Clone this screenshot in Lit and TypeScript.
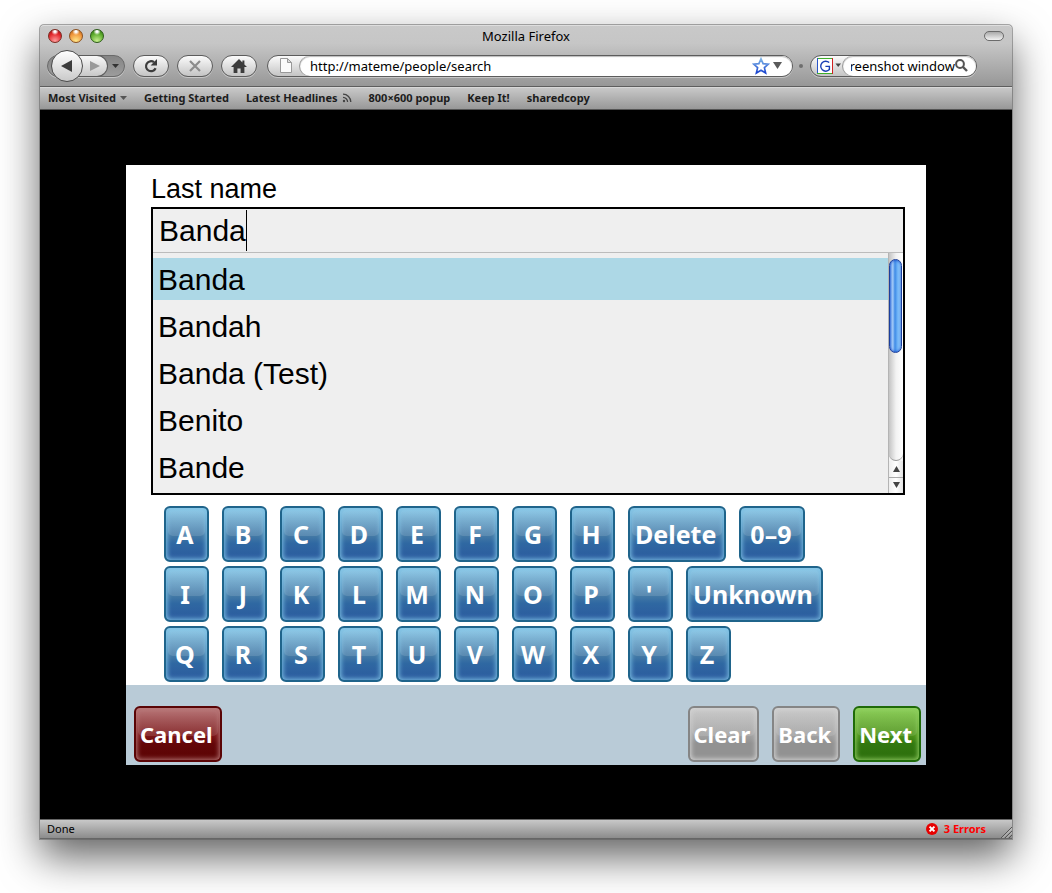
import { LitElement, html, css, svg } from "lit";
import { customElement, property, state, query } from "lit/decorators.js";
import { classMap } from "lit/directives/class-map.js";

const UI_FONT = css`"Noto Sans", "Open Sans", sans-serif`;
const FORM_FONT = css`"Liberation Sans", Arial, sans-serif`;

@customElement("glass-key")
class GlassKey extends LitElement {
  @property() label = "";
  @property({ reflect: true }) tone = "blue";

  static styles = css`
    :host {
      display: block;
      --edge: #1f648b;
      --top: #92cdea;
      --mid: #4379a6;
      --low: #2f68a2;
      --end: #2b5a9e;
      --glow: #7cc0e4;
    }
    :host([tone="red"]) {
      --edge: #5a0405;
      --top: #b87678;
      --mid: #7a1416;
      --low: #640709;
      --end: #5a0303;
      --glow: #b87878;
    }
    :host([tone="gray"]) {
      --edge: #858585;
      --top: #cacaca;
      --mid: #a0a0a0;
      --low: #929292;
      --end: #929292;
      --glow: #d4d4d4;
    }
    :host([tone="green"]) {
      --edge: #1f6a08;
      --top: #8ccf58;
      --mid: #4a9016;
      --low: #327810;
      --end: #2c6c0c;
      --glow: #92d064;
    }
    .key {
      position: relative;
      isolation: isolate;
      display: block;
      box-sizing: border-box;
      min-width: 45px;
      width: 100%;
      height: 56px;
      margin: 0;
      padding: 0 8px 0 5px;
      border: 2px solid var(--edge);
      border-radius: 6px;
      color: #fff;
      font: bold 25px/52px ${UI_FONT};
      text-align: center;
      white-space: nowrap;
      cursor: pointer;
      background: linear-gradient(var(--top), var(--mid) 54%, var(--low) 68%, var(--end));
      box-shadow: inset 0 0 5px 1px var(--glow);
    }
    .key.word {
      min-width: 66px;
    }
    .key::before {
      content: "";
      position: absolute;
      z-index: -1;
      inset: 2px 2px 24px;
      border-radius: 5px;
      background: linear-gradient(rgba(255, 255, 255, 0.02), rgba(255, 255, 255, 0.12));
    }
    :host(:not([tone="blue"])) .key {
      padding: 0 7px 0 4px;
      font-size: 22px;
    }
  `;

  render() {
    return html`<button class=${classMap({ key: true, word: this.label.length > 1 })} type="button">${this.label}</button>`;
  }
}

@customElement("browser-chrome")
class BrowserChrome extends LitElement {
  @query(".search-text") searchText!: HTMLInputElement;

  static styles = css`
    :host {
      display: block;
      font-family: ${UI_FONT};
      color: #000;
    }
    .top {
      border-bottom: 1px solid #5e5e5e;
      background: linear-gradient(#c9c9c9, #c6c6c6 30%, #979797);
      box-shadow: inset 0 1px #dedede;
      border-radius: 4px 4px 0 0;
    }
    .titlebar {
      display: grid;
      grid-template-columns: 1fr auto 1fr;
      align-items: center;
      height: 22px;
      padding: 0 8px;
    }
    .lights {
      display: flex;
      gap: 7px;
    }
    .light {
      width: 14px;
      height: 14px;
      padding: 0;
      box-sizing: border-box;
      border: 1px solid #7b2a20;
      border-radius: 50%;
      background: radial-gradient(circle at 50% 12%, #fff 0 8%, transparent 30%),
        radial-gradient(circle at 50% 90%, #ff9d9d, #e2262b 60%, #8c0f12);
    }
    .light.amber {
      border-color: #8a5020;
      background: radial-gradient(circle at 50% 12%, #fff 0 8%, transparent 30%),
        radial-gradient(circle at 50% 90%, #ffe88a, #f0943a 60%, #a85a10);
    }
    .light.green {
      border-color: #2c5c18;
      background: radial-gradient(circle at 50% 12%, #fff 0 8%, transparent 30%),
        radial-gradient(circle at 50% 90%, #c8f090, #5cab2c 60%, #2c6c10);
    }
    .title {
      font-size: 13px;
      line-height: 22px;
    }
    .collapse {
      justify-self: end;
      width: 20px;
      height: 10px;
      box-sizing: border-box;
      padding: 0;
      border: 1px solid #6b6b6b;
      border-radius: 5px;
      background: linear-gradient(#aaa, #f2f2f2);
    }
    .toolbar {
      display: flex;
      align-items: center;
      gap: 8px;
      box-sizing: border-box;
      height: 39px;
      padding: 0 35px 2px 7px;
    }
    .pill {
      box-sizing: border-box;
      height: 22px;
      border: 1px solid #5c5c5c;
      border-radius: 11px;
      background: linear-gradient(#fbfbfb, #c4c4c4);
      box-shadow: 0 1px rgba(255, 255, 255, 0.4);
    }
    button.pill {
      display: grid;
      place-items: center;
      width: 36px;
      padding: 0;
    }
    .history {
      display: flex;
      align-items: center;
      width: 78px;
      background: linear-gradient(#858585, #9c9c9c);
      border-color: #6a6a6a;
    }
    .back {
      display: grid;
      place-items: center;
      flex: none;
      box-sizing: border-box;
      width: 32px;
      height: 32px;
      padding: 0;
      margin-left: 3px;
      z-index: 1;
      border: 1px solid #4c4c4c;
      border-radius: 50%;
      background: linear-gradient(#fff, #c9c9c9);
    }
    .forward {
      display: grid;
      place-items: center;
      width: 30px;
      height: 22px;
      padding: 0 0 0 4px;
      margin-left: -5px;
      border: 1px solid #5c5c5c;
      border-left: 0;
      border-radius: 0 11px 11px 0;
      background: linear-gradient(#f8f8f8, #c8c8c8);
    }
    .drop {
      display: grid;
      place-items: center;
      padding: 0;
      border: 0;
      background: none;
    }
    .history .drop {
      width: 14px;
      height: 20px;
    }
    .url {
      display: flex;
      flex: 1;
      margin-left: 2px;
      min-width: 0;
    }
    .badge {
      display: flex;
      align-items: center;
      justify-content: center;
      width: 32px;
      padding-left: 4px;
      box-sizing: border-box;
    }
    .field {
      display: flex;
      flex: 1;
      align-items: center;
      min-width: 0;
      padding: 0 10px;
      border-radius: 10px;
      background: #fff;
      box-shadow: inset 0 1px 1px #bbb, -1px 0 #999;
    }
    .field input {
      flex: 1;
      min-width: 0;
      width: 0;
      height: 20px;
      padding: 0;
      border: 0;
      outline: 0;
      background: none;
      color: #000;
      font: 13px/20px ${UI_FONT};
    }
    .url .drop {
      margin-left: 3px;
    }
    .grip {
      width: 4px;
      height: 4px;
      border-radius: 50%;
      background: #6e6e6e;
      margin: 0 -2px;
    }
    .search {
      display: flex;
      width: 167px;
      margin-left: 1px;
    }
    .search .field {
      padding: 0 8px;
    }
    .icon-button {
      display: grid;
      place-items: center;
      padding: 0;
      border: 0;
      background: none;
    }
    .bookmarks {
      display: flex;
      align-items: center;
      gap: 17px;
      height: 22px;
      padding: 0 8px;
      border-bottom: 1px solid #555;
      background: linear-gradient(#cacaca, #989898);
      box-shadow: inset 0 1px #d8d8d8;
    }
    .bookmark {
      display: flex;
      align-items: center;
      gap: 4px;
      color: #1c1c1c;
      font-size: 11px;
      font-weight: bold;
      line-height: 20px;
      text-decoration: none;
      white-space: nowrap;
    }
  `;

  firstUpdated() {
    this.searchText.scrollLeft = this.searchText.scrollWidth;
  }

  private triangle(width: number, height: number, fill = "#444") {
    return html`<svg width=${width} height=${height} viewBox="0 0 10 10" preserveAspectRatio="none">
      ${svg`<path d="M0 0H10L5 10Z" fill=${fill} />`}
    </svg>`;
  }

  render() {
    return html`
      <div class="top">
        <div class="titlebar">
          <div class="lights">
            <button class="light" aria-label="Close"></button>
            <button class="light amber" aria-label="Minimize"></button>
            <button class="light green" aria-label="Zoom"></button>
          </div>
          <div class="title">Mozilla Firefox</div>
          <button class="collapse" aria-label="Toggle toolbar"></button>
        </div>
        <div class="toolbar">
          <div class="pill history">
            <button class="back" aria-label="Back">
              <svg width="12" height="12" viewBox="0 0 12 12"><path d="M0 6L11 0V12Z" fill="#3c3c3c" /></svg>
            </button>
            <button class="forward" aria-label="Forward">
              <svg width="10" height="10" viewBox="0 0 10 10"><path d="M10 5L0 0V10Z" fill="#999" /></svg>
            </button>
            <button class="drop" aria-label="Recent pages">${this.triangle(7, 4, "#333")}</button>
          </div>
          <button class="pill" aria-label="Reload">
            <svg width="14" height="14" viewBox="0 0 14 14">
              <path d="M11.6 9.2A5 5 0 1 1 10 3.2" fill="none" stroke="#3c3c3c" stroke-width="2.2" />
              <path d="M13 0V6.4H6.6Z" fill="#3c3c3c" />
            </svg>
          </button>
          <button class="pill" aria-label="Stop">
            <svg width="12" height="12" viewBox="0 0 12 12">
              <path d="M1 1L11 11M11 1L1 11" fill="none" stroke="#8c8c8c" stroke-width="2.2" />
            </svg>
          </button>
          <button class="pill" aria-label="Home">
            <svg width="16" height="14" viewBox="0 0 16 14">
              <path d="M8 0L11.4 3.4V1.4H13.4V5.4L16 8H13.4V14H9.6V9.4H6.4V14H2.6V8H0Z" fill="#3c3c3c" />
            </svg>
          </button>
          <div class="pill url">
            <div class="badge">
              <svg width="12" height="15" viewBox="0 0 12 15">
                <path d="M.5 .5H7.5L11.5 4.5V14.5H.5Z" fill="#fbfbfb" stroke="#999" />
                <path d="M7.5 .5V4.5H11.5Z" fill="#ddd" stroke="#999" />
              </svg>
            </div>
            <div class="field">
              <input type="text" aria-label="Address" .value=${"http://mateme/people/search"} />
              <button class="icon-button" aria-label="Bookmark this page">
                <svg width="18" height="18" viewBox="0 0 18 18">
                  <defs>
                    <linearGradient id="star" x1="0" y1="0" x2="0" y2="1">
                      <stop offset="0" stop-color="#7db4e6" />
                      <stop offset="1" stop-color="#1b45cf" />
                    </linearGradient>
                  </defs>
                  <path
                    d="M9 1.8L11.1 6.6L16.3 7.1L12.4 10.6L13.6 15.9L9 13.2L4.4 15.9L5.6 10.6L1.7 7.1L6.9 6.6Z"
                    fill="#fff" stroke="url(#star)" stroke-width="1.7" />
                </svg>
              </button>
              <button class="drop" aria-label="Show history">${this.triangle(9, 7, "#5a5a5a")}</button>
            </div>
          </div>
          <div class="grip"></div>
          <div class="pill search">
            <button class="drop badge" aria-label="Search engine">
              <svg width="28" height="16" viewBox="0 0 28 16">
                <rect x="2" width="16" height="16" fill="#fff" />
                <path d="M2 .5H17" stroke="#3fae2a" />
                <path d="M2.5 0V16" stroke="#2a55c8" />
                <path d="M2 15.5H18" stroke="#3fae2a" />
                <path d="M17.5 0V16" stroke="#d02020" />
                <path d="M14.2 4.6A5 5 0 1 0 14.4 11.6V8.4H10.4" fill="none" stroke="#1b3fb4" stroke-width="1.4" />
                <path d="M20.5 5.5H26L23.2 9Z" fill="#444" />
              </svg>
            </button>
            <div class="field">
              <input class="search-text" type="text" aria-label="Search" .value=${"screenshot window"} />
              <button class="icon-button" aria-label="Go">
                <svg width="13" height="13" viewBox="0 0 13 13">
                  <circle cx="5" cy="5" r="3.9" fill="none" stroke="#555" stroke-width="2" />
                  <path d="M8 8L12 12" stroke="#555" stroke-width="2.4" />
                </svg>
              </button>
            </div>
          </div>
        </div>
      </div>
      <nav class="bookmarks">
        <a class="bookmark" href="#">Most Visited ${this.triangle(7, 4, "#555")}</a>
        <a class="bookmark" href="#">Getting Started</a>
        <a class="bookmark" href="#">Latest Headlines
          <svg width="10" height="10" viewBox="0 0 10 10">
            <circle cx="2" cy="8" r="1.2" fill="#444" />
            <path d="M1 4.4A4.6 4.6 0 0 1 5.6 9M1 1.2A7.8 7.8 0 0 1 8.8 9" fill="none" stroke="#444" stroke-width="1.3" />
          </svg>
        </a>
        <a class="bookmark" href="#">800×600 popup</a>
        <a class="bookmark" href="#">Keep It!</a>
        <a class="bookmark" href="#">sharedcopy</a>
      </nav>
    `;
  }
}

@customElement("name-picker")
class NamePicker extends LitElement {
  @state() selected = 0;
  private names = ["Banda", "Bandah", "Banda (Test)", "Benito", "Bande"];

  static styles = css`
    :host {
      display: block;
      font-family: ${FORM_FONT};
      color: #000;
    }
    .label {
      display: block;
      height: 42px;
      font-size: 27px;
      line-height: 48px;
    }
    .box {
      border: 2px solid #000;
      background: #efefef;
    }
    .entry {
      display: flex;
      align-items: center;
      height: 43px;
      padding-left: 6px;
      border-bottom: 1px solid #bcbcbc;
      cursor: text;
    }
    .entry input {
      field-sizing: content;
      min-width: 1px;
      height: 43px;
      padding: 0;
      border: 0;
      outline: 0;
      background: none;
      color: #000;
      font: 30px/43px ${FORM_FONT};
    }
    .caret {
      width: 1px;
      height: 41px;
      background: #000;
    }
    .results {
      display: flex;
    }
    .names {
      display: flex;
      flex: 1;
      flex-direction: column;
      gap: 5px;
      margin: 0;
      padding: 5px 0;
      list-style: none;
    }
    .name {
      height: 42px;
      padding-left: 5px;
      font-size: 30px;
      line-height: 44px;
      cursor: pointer;
    }
    .name.chosen {
      background: #add8e6;
    }
    .scrollbar {
      display: flex;
      flex-direction: column;
      box-sizing: border-box;
      width: 15px;
      border-left: 1px solid #b4b4b4;
      background: #f4f4f4;
    }
    .track {
      flex: 1;
      padding-top: 6px;
      border-radius: 0 0 7px 7px;
      border-bottom: 1px solid #999;
      background: linear-gradient(90deg, #c4c4c4, #f2f2f2 50%, #fff);
    }
    .thumb {
      box-sizing: border-box;
      width: 13px;
      height: 94px;
      border: 1px solid #1c3f9c;
      border-radius: 7px;
      background: linear-gradient(90deg, #6ea6ee, #a6cdf8 25%, #3f8be6 45%, #72b6f8 70%, #a4dcff);
      box-shadow: inset 0 0 3px #0a38c0;
    }
    .step {
      display: grid;
      place-items: center;
      height: 16px;
      padding: 0;
      border: 0;
      background: linear-gradient(90deg, #eee, #fff 50%, #e4e4e4);
    }
    .step + .step {
      border-top: 1px solid #aaa;
    }
  `;

  render() {
    return html`
      <label class="label" for="last-name">Last name</label>
      <div class="box">
        <label class="entry" for="last-name">
          <input id="last-name" type="text" autocomplete="off" .value=${"Banda"} /><span class="caret"></span>
        </label>
        <div class="results">
          <ul class="names" role="listbox" aria-label="Suggestions">
            ${this.names.map(
              (name, i) => html`<li
                class=${classMap({ name: true, chosen: i === this.selected })}
                role="option"
                aria-selected=${i === this.selected}
                @click=${() => (this.selected = i)}
              >${name}</li>`
            )}
          </ul>
          <div class="scrollbar">
            <div class="track"><div class="thumb"></div></div>
            <button class="step" aria-label="Scroll up">
              <svg width="7" height="6" viewBox="0 0 7 6"><path d="M3.5 0L7 6H0Z" fill="#444" /></svg>
            </button>
            <button class="step" aria-label="Scroll down">
              <svg width="7" height="6" viewBox="0 0 7 6"><path d="M0 0H7L3.5 6Z" fill="#444" /></svg>
            </button>
          </div>
        </div>
      </div>
    `;
  }
}

@customElement("app-root")
class AppRoot extends LitElement {
  private rows = [
    ["A", "B", "C", "D", "E", "F", "G", "H", "Delete", "0–9"],
    ["I", "J", "K", "L", "M", "N", "O", "P", "'", "Unknown"],
    ["Q", "R", "S", "T", "U", "V", "W", "X", "Y", "Z"],
  ];

  static styles = css`
    :host {
      display: flex;
      flex-direction: column;
      box-sizing: border-box;
      min-height: 100vh;
      padding: 25px 40px 54px;
      background: #fff;
      overflow: hidden;
    }
    .window {
      display: flex;
      flex: 1;
      flex-direction: column;
      border-radius: 4px 4px 0 0;
      background: #000;
      box-shadow: 0 0 0 1px rgba(90, 90, 90, 0.5), 0 18px 40px rgba(0, 0, 0, 0.62);
    }
    .page {
      display: flex;
      flex: 1;
      align-items: center;
      justify-content: center;
    }
    .form {
      width: 100%;
      max-width: 800px;
      background: #fff;
    }
    .question {
      padding: 0 21px 0 25px;
    }
    .keyboard {
      display: flex;
      flex-direction: column;
      gap: 4px;
      padding: 11px 0 3px 38px;
    }
    .row,
    .end {
      display: flex;
      gap: 13px;
    }
    .actions {
      display: flex;
      justify-content: space-between;
      padding: 21px 5px 3px 8px;
      background: #b9cbd7;
    }
    .status {
      display: flex;
      align-items: center;
      justify-content: space-between;
      box-sizing: border-box;
      height: 20px;
      padding-left: 7px;
      border-top: 1px solid #666;
      border-bottom: 1px solid #666;
      background: linear-gradient(#c8c8c8, #8c8c8c);
      color: #000;
      font: 11px/18px ${UI_FONT};
    }
    .errors {
      display: flex;
      align-items: center;
      gap: 6px;
      color: #f00;
      font-weight: bold;
    }
    .resize {
      margin-left: 8px;
      align-self: end;
    }
  `;

  render() {
    return html`
      <div class="window">
        <browser-chrome></browser-chrome>
        <main class="page">
          <div class="form">
            <name-picker class="question"></name-picker>
            <div class="keyboard">
              ${this.rows.map(
                (row) => html`<div class="row">
                  ${row.map((label) => html`<glass-key label=${label}></glass-key>`)}
                </div>`
              )}
            </div>
            <div class="actions">
              <glass-key tone="red" label="Cancel"></glass-key>
              <div class="end">
                <glass-key tone="gray" label="Clear"></glass-key>
                <glass-key tone="gray" label="Back"></glass-key>
                <glass-key tone="green" label="Next"></glass-key>
              </div>
            </div>
          </div>
        </main>
        <footer class="status">
          <span>Done</span>
          <span class="errors">
            <svg width="12" height="12" viewBox="0 0 12 12">
              <circle cx="6" cy="6" r="6" fill="#e60000" />
              <path d="M3.6 3.6L8.4 8.4M8.4 3.6L3.6 8.4" stroke="#fff" stroke-width="2" />
            </svg>
            3 Errors
            <svg class="resize" width="12" height="12" viewBox="0 0 12 12">
              <path d="M1 12L12 1M5 12L12 5M9 12L12 9" stroke="#555" />
              <path d="M2 12.5L12.5 2M6 12.5L12.5 6" stroke="#ddd" stroke-width=".6" />
            </svg>
          </span>
        </footer>
      </div>
    `;
  }
}
